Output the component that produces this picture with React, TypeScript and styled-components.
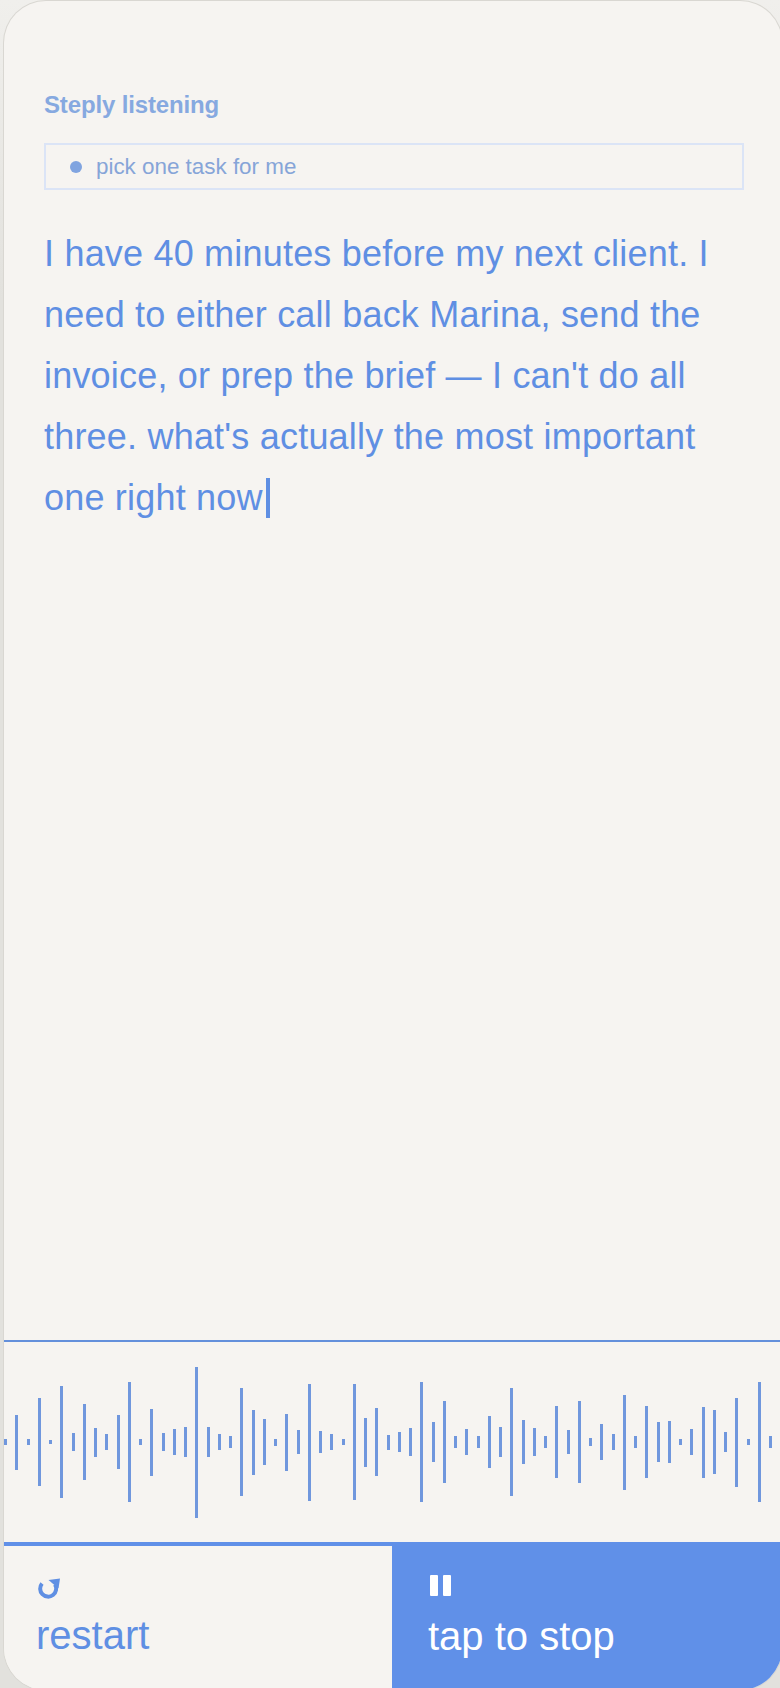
import { createGlobalStyle, styled } from "styled-components";

const BARS = [
  6, 55, 6, 88, 4, 112, 18, 76, 29, 16, 54, 120, 6, 67, 18, 26, 30, 151, 30, 16, 12, 108, 65,
  46, 7, 57, 24, 117, 22, 16, 6, 116, 49, 68, 15, 20, 28, 120, 40, 82, 12, 26, 12, 52, 30, 108,
  44, 28, 12, 72, 24, 82, 8, 36, 16, 95, 12, 72, 40, 42, 6, 26, 71, 64, 20, 89, 6, 120, 12,
];

const GlobalStyle = createGlobalStyle`
  html, body {
    margin: 0;
    height: 100%;
    background: linear-gradient(#f0efec, #e2e1dd 300px);
  }
  #root {
    height: 100%;
  }
`;

const Phone = styled.div`
  box-sizing: border-box;
  width: 780px;
  height: 1688px;
  padding: 1px 0 0 4px;
  overflow: hidden;
  font-family: "Liberation Sans", Arial, sans-serif;
`;

const Screen = styled.main`
  width: 778px;
  height: 1689px;
  display: flex;
  flex-direction: column;
  background: #f6f4f1;
  border-radius: 42px;
  box-shadow: 0 0 0 1px #d9d7d2;
  overflow: hidden;
`;

const Content = styled.section`
  flex: 1;
  padding: 90px 38px 0 40px;
`;

const Label = styled.div`
  font-size: 24px;
  line-height: 28px;
  font-weight: 700;
  letter-spacing: -0.15px;
  color: #86a9e0;
`;

const Chip = styled.div`
  box-sizing: border-box;
  height: 47px;
  margin-top: 24px;
  padding-left: 24px;
  display: flex;
  align-items: center;
  gap: 14px;
  border: 2px solid #dbe4f6;
  font-size: 22.4px;
  color: #86a5d8;
`;

const Dot = styled.span`
  width: 12px;
  height: 12px;
  border-radius: 50%;
  background: #80a4e0;
`;

const Transcript = styled.p`
  margin: 33px 0 0;
  font-size: 36px;
  line-height: 61px;
  letter-spacing: 0.2px;
  color: #5f8fe3;
`;

const Caret = styled.span`
  display: inline-block;
  width: 4px;
  height: 40px;
  margin-left: 3px;
  vertical-align: -8px;
  background: #5f8fe3;
`;

const Wave = styled.div`
  height: 200px;
  display: flex;
  align-items: center;
  justify-content: space-between;
  padding-right: 9px;
  border-top: 2px solid #6490db;
`;

const Bar = styled.span`
  width: 3px;
  background: #7097dd;
`;

const Controls = styled.div`
  height: 148px;
  display: flex;
`;

const Control = styled.button<{ $primary?: boolean }>`
  box-sizing: border-box;
  width: ${(p) => (p.$primary ? "390px" : "388px")};
  padding: ${(p) => (p.$primary ? "27px 0 0 36px" : "31px 0 0 32px")};
  display: flex;
  flex-direction: column;
  align-items: flex-start;
  border: 0;
  border-top: 4px solid #6090e8;
  background: ${(p) => (p.$primary ? "#6090e8" : "#f6f4f1")};
  color: ${(p) => (p.$primary ? "#fff" : "#5f8fe3")};
  font-family: inherit;
  font-size: 40px;
  line-height: 46px;
`;

const IconBox = styled.svg<{ $gap: number }>`
  display: block;
  margin-bottom: ${(p) => p.$gap}px;
`;

export default function App() {
  return (
    <Phone>
      <GlobalStyle />
      <Screen>
        <Content>
          <Label>Steply listening</Label>
          <Chip>
            <Dot />
            pick one task for me
          </Chip>
          <Transcript>
            I have 40 minutes before my next client. I need to either call back Marina, send the
            invoice, or prep the brief — I can't do all three. what's actually the most important
            one right now
            <Caret />
          </Transcript>
        </Content>
        <Wave>
          {BARS.map((h, i) => (
            <Bar key={i} style={{ height: h }} />
          ))}
        </Wave>
        <Controls>
          <Control>
            <IconBox $gap={11} width="25" height="24" viewBox="0 0 25 24" fill="none">
              <path d="M6 6.5A8 8 0 1 0 19 7.5" stroke="currentColor" strokeWidth="4" />
              <path d="M12.5 3l11.5-1.5-1.5 10z" fill="currentColor" />
            </IconBox>
            restart
          </Control>
          <Control $primary>
            <IconBox $gap={16} width="24" height="24" viewBox="0 0 24 24" fill="currentColor">
              <rect x="2" y="2" width="8" height="21" rx="1" />
              <rect x="15" y="2" width="8" height="21" rx="1" />
            </IconBox>
            tap to stop
          </Control>
        </Controls>
      </Screen>
    </Phone>
  );
}
